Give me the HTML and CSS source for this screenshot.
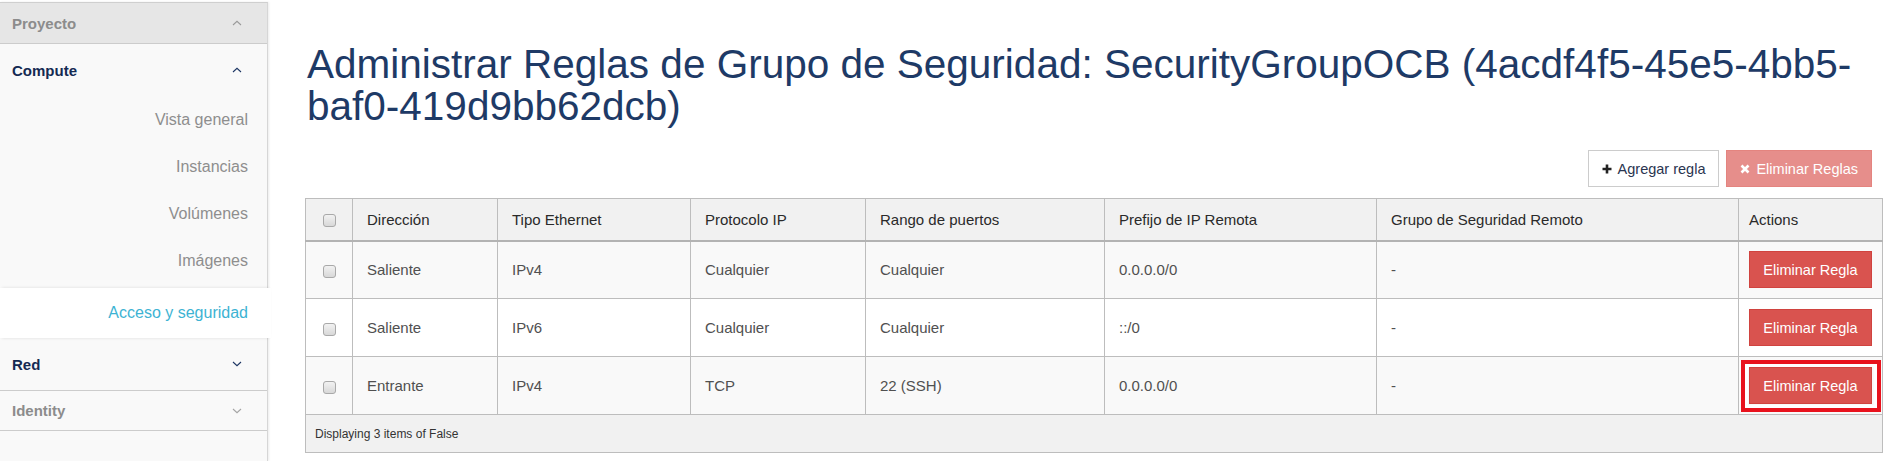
FILE: index.html
```html
<!DOCTYPE html>
<html lang="es">
<head>
<meta charset="utf-8">
<title>Administrar Reglas de Grupo de Seguridad</title>
<link rel="stylesheet" href="styles.css">
</head>
<body>
<div class="layout">
  <nav class="sidebar">
    <div class="panel-head proyecto">
      <span>Proyecto</span>
      <svg class="chev" width="10" height="6" viewBox="0 0 10 6"><polyline points="1,5 5,1.3 9,5" fill="none" stroke="#9a9a9a" stroke-width="1.1"/></svg>
    </div>
    <div class="panel-head compute">
      <span>Compute</span>
      <svg class="chev" width="10" height="6" viewBox="0 0 10 6"><polyline points="1,5 5,1.3 9,5" fill="none" stroke="#1c3563" stroke-width="1.1"/></svg>
    </div>
    <ul class="submenu">
      <li>Vista general</li>
      <li>Instancias</li>
      <li>Volúmenes</li>
      <li>Imágenes</li>
    </ul>
    <div class="active-item">Acceso y seguridad</div>
    <div class="panel-head red">
      <span>Red</span>
      <svg class="chev" width="10" height="6" viewBox="0 0 10 6"><polyline points="1,1 5,4.7 9,1" fill="none" stroke="#1c3563" stroke-width="1.1"/></svg>
    </div>
    <div class="panel-head identity">
      <span>Identity</span>
      <svg class="chev" width="10" height="6" viewBox="0 0 10 6"><polyline points="1,1 5,4.7 9,1" fill="none" stroke="#a5a5a5" stroke-width="1.1"/></svg>
    </div>
  </nav>
  <main class="main">
    <h1 class="page-title">Administrar Reglas de Grupo de Seguridad: SecurityGroupOCB (4acdf4f5-45e5-4bb5-baf0-419d9bb62dcb)</h1>
    <div class="table-actions">
      <button class="btn btn-default"><svg width="10" height="10" viewBox="0 0 10 10"><path d="M5 0.5V9.5M0.5 5H9.5" stroke="#222" stroke-width="2.6"/></svg>Agregar regla</button>
      <button class="btn btn-danger-disabled"><svg width="10" height="10" viewBox="0 0 10 10"><path d="M1.5 1.5L8.5 8.5M8.5 1.5L1.5 8.5" stroke="#fff" stroke-width="2.6"/></svg>Eliminar Reglas</button>
    </div>
    <table class="rules">
      <colgroup>
        <col class="c-check"><col class="c-dir"><col class="c-eth"><col class="c-proto"><col class="c-range"><col class="c-prefix"><col class="c-group"><col class="c-actions">
      </colgroup>
      <thead>
        <tr>
          <th class="check"><span class="checkbox"></span></th>
          <th>Dirección</th>
          <th>Tipo Ethernet</th>
          <th>Protocolo IP</th>
          <th>Rango de puertos</th>
          <th>Prefijo de IP Remota</th>
          <th>Grupo de Seguridad Remoto</th>
          <th class="actions">Actions</th>
        </tr>
      </thead>
      <tbody>
        <tr class="odd">
          <td class="check"><span class="checkbox"></span></td>
          <td>Saliente</td>
          <td>IPv4</td>
          <td>Cualquier</td>
          <td>Cualquier</td>
          <td>0.0.0.0/0</td>
          <td>-</td>
          <td class="actions"><button class="btn btn-danger">Eliminar Regla</button></td>
        </tr>
        <tr class="even">
          <td class="check"><span class="checkbox"></span></td>
          <td>Saliente</td>
          <td>IPv6</td>
          <td>Cualquier</td>
          <td>Cualquier</td>
          <td>::/0</td>
          <td>-</td>
          <td class="actions"><button class="btn btn-danger">Eliminar Regla</button></td>
        </tr>
        <tr class="odd">
          <td class="check"><span class="checkbox"></span></td>
          <td>Entrante</td>
          <td>IPv4</td>
          <td>TCP</td>
          <td>22 (SSH)</td>
          <td>0.0.0.0/0</td>
          <td>-</td>
          <td class="actions highlighted"><button class="btn btn-danger">Eliminar Regla</button><span class="highlight-box"></span></td>
        </tr>
      </tbody>
      <tfoot>
        <tr>
          <td colspan="8">Displaying 3 items of False</td>
        </tr>
      </tfoot>
    </table>
  </main>
</div>
</body>
</html>
```

FILE: styles.css
```css
* { box-sizing: border-box; }

html, body {
  margin: 0;
  padding: 0;
  background: #ffffff;
  font-family: "Liberation Sans", Arial, sans-serif;
}

.layout {
  display: flex;
  min-height: 461px;
}

/* ---------- Sidebar ---------- */
.sidebar {
  width: 268px;
  flex: 0 0 268px;
  margin-top: 2px;
  background: #f9f9f9;
  border-top: 1px solid #cfcfcf;
  border-right: 1px solid #d6d6d6;
  box-shadow: 1px 0 2px rgba(0, 0, 0, 0.08);
  display: flex;
  flex-direction: column;
}

.panel-head {
  display: flex;
  align-items: center;
  justify-content: space-between;
  padding: 0 25px 0 12px;
  font-size: 15px;
  font-weight: bold;
}

.panel-head .chev { display: block; }

.proyecto {
  height: 41px;
  background: #e6e6e6;
  color: #8c8c8c;
  border-bottom: 1px solid #cccccc;
}

.compute {
  height: 52px;
  color: #142a52;
}

.submenu {
  list-style: none;
  margin: 0;
  padding: 0 19px 4px 0;
}

.submenu li {
  height: 47px;
  display: flex;
  align-items: center;
  justify-content: flex-end;
  font-size: 16px;
  color: #8e8e8e;
}

.active-item {
  position: relative;
  z-index: 2;
  height: 50px;
  margin-right: -4px;
  padding-right: 23px;
  display: flex;
  align-items: center;
  justify-content: flex-end;
  background: #ffffff;
  color: #3db3d3;
  font-size: 16px;
  box-shadow: 0 -2px 3px -2px rgba(0, 0, 0, 0.12), 0 2px 3px -2px rgba(0, 0, 0, 0.12);
}

.red {
  height: 53px;
  color: #142a52;
  border-bottom: 1px solid #cccccc;
}

.identity {
  height: 40px;
  color: #8c8c8c;
  border-bottom: 1px solid #cccccc;
}

/* ---------- Main ---------- */
.main {
  flex: 1;
  min-width: 0;
  padding: 43px 4px 0 37px;
}

.page-title {
  margin: 0 0 23px 2px;
  font-size: 40.5px;
  line-height: 42px;
  font-weight: normal;
  color: #1e3a66;
}

.table-actions {
  display: flex;
  justify-content: flex-end;
  gap: 7px;
  margin: 0 10px 11px 0;
}

.btn {
  display: inline-flex;
  align-items: center;
  justify-content: center;
  gap: 6px;
  height: 37px;
  padding: 0 13px;
  font-family: "Liberation Sans", Arial, sans-serif;
  font-size: 14.5px;
  border-radius: 0;
  cursor: pointer;
}

.btn svg { display: block; }

.btn-default {
  background: #ffffff;
  border: 1px solid #cccccc;
  color: #2a3550;
}

.btn-danger-disabled {
  background: #e68e8b;
  border: 1px solid #e4847f;
  color: #ffffff;
}

.btn-danger {
  width: 100%;
  background: #d9534f;
  border: 1px solid #d0433f;
  color: #ffffff;
}

/* ---------- Table ---------- */
.rules {
  width: 100%;
  table-layout: fixed;
  border-collapse: collapse;
  border: 1px solid #bdbdbd;
  font-size: 15px;
}

.c-check { width: 47px; }
.c-dir { width: 145px; }
.c-eth { width: 193px; }
.c-proto { width: 175px; }
.c-range { width: 239px; }
.c-prefix { width: 272px; }
.c-group { width: 362px; }
.c-actions { width: 144px; }

.rules th,
.rules td {
  border: 1px solid #bdbdbd;
  text-align: left;
  vertical-align: middle;
  padding: 0 14px;
  white-space: nowrap;
}

.rules thead th {
  height: 42px;
  background: #f1f1f1;
  color: #2a2a2a;
  font-weight: normal;
  border-bottom: 2px solid #b3b3b3;
}

.rules tbody td {
  height: 58px;
  color: #505050;
}

.rules tr.odd td { background: #f9f9f9; }
.rules tr.even td { background: #ffffff; }

.rules .check {
  padding: 0;
  text-align: center;
}

.rules .actions {
  padding: 0 10px;
}

.rules td.highlighted { position: relative; }

.highlight-box {
  position: absolute;
  top: 3px;
  right: 1px;
  bottom: 2px;
  left: 2px;
  border: 4px solid #e8121d;
  box-shadow: inset 0 0 0 3px #ffffff;
  pointer-events: none;
}

.checkbox {
  display: inline-block;
  width: 13px;
  height: 13px;
  border: 1px solid #a9a9a9;
  border-radius: 3px;
  background: linear-gradient(#f2f2f2, #d8d8d8);
  vertical-align: middle;
}

.rules tfoot td {
  height: 38px;
  background: #f1f1f1;
  color: #333333;
  font-size: 12px;
  padding: 0 9px;
}
```
